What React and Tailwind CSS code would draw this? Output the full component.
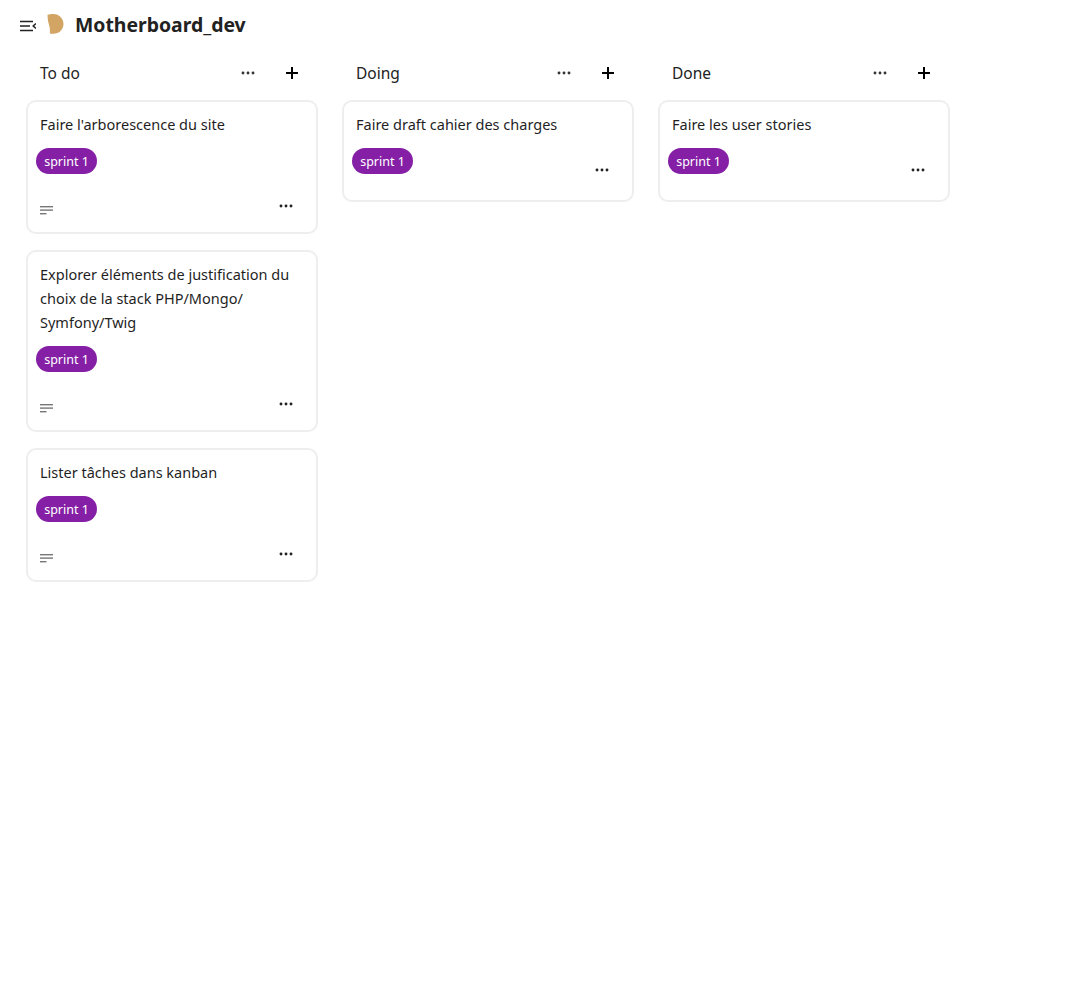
const font = { fontFamily: '"Noto Sans", "Open Sans", sans-serif' };

function Dots({ className = "" }) {
  return (
    <svg width="14" height="4" viewBox="0 0 14 4" className={className} fill="currentColor">
      <circle cx="2" cy="2" r="1.45" />
      <circle cx="7" cy="2" r="1.45" />
      <circle cx="12" cy="2" r="1.45" />
    </svg>
  );
}

function Plus() {
  return (
    <svg width="14" height="14" viewBox="0 0 14 14" stroke="#000" strokeWidth="2" fill="none">
      <path d="M7 1v12M1 7h12" />
    </svg>
  );
}

function Desc() {
  return (
    <svg width="14" height="9" viewBox="0 0 14 9" fill="#777">
      <rect x="0" y="0" width="13" height="1.4" />
      <rect x="0" y="3.4" width="13" height="1.4" />
      <rect x="0" y="7" width="6.5" height="1.4" />
    </svg>
  );
}

function Badge() {
  return (
    <span className="flex h-[26px] w-[61px] items-center justify-center rounded-[13px] bg-[#851fa5] pt-[2px] text-[12.5px] text-white">
      sprint 1
    </span>
  );
}

function Card({ title, desc }) {
  return (
    <div className="rounded-[10px] border-2 border-[#eeeeee] bg-white">
      <div className="px-3 pt-[10px] text-[14.5px] leading-6 text-[#1f1f1f]">
        {title.map((l) => (
          <div key={l} className="whitespace-nowrap">{l}</div>
        ))}
      </div>
      {desc ? (
        <>
          <div className="mt-3 flex pl-2"><Badge /></div>
          <div className="mt-[27px] flex h-[12px] items-start justify-between pl-3 pr-[23px]">
            <span className="mt-[5px] flex"><Desc /></span>
            <Dots className="mt-[3px] text-[#222]" />
          </div>
          <div className="h-[19px]" />
        </>
      ) : (
        <div className="mt-3 flex h-[52px] items-start justify-between pl-2 pr-[23px]">
          <Badge />
          <Dots className="mt-5 text-[#222]" />
        </div>
      )}
    </div>
  );
}

function Column({ name, cards }) {
  return (
    <div className="w-[292px] shrink-0">
      <div className="flex h-[50px] items-center justify-between pb-1 pl-[14px] pr-[19px]">
        <span className="pt-[2px] text-[15.5px] text-[#222]">{name}</span>
        <div className="flex items-center gap-[30px]">
          <Dots className="text-[#333]" />
          <Plus />
        </div>
      </div>
      <div className="flex flex-col gap-4">
        {cards.map((c) => (
          <Card key={c.title[0]} {...c} />
        ))}
      </div>
    </div>
  );
}

const columns = [
  {
    name: "To do",
    cards: [
      { title: ["Faire l'arborescence du site"], desc: true },
      {
        title: ["Explorer éléments de justification du", "choix de la stack PHP/Mongo/", "Symfony/Twig"],
        desc: true,
      },
      { title: ["Lister tâches dans kanban"], desc: true },
    ],
  },
  { name: "Doing", cards: [{ title: ["Faire draft cahier des charges"] }] },
  { name: "Done", cards: [{ title: ["Faire les user stories"] }] },
];

export default function App() {
  return (
    <div className="min-h-[997px] bg-white" style={font}>
      <header className="flex h-[50px] items-center pb-[2px] pl-5">
        <svg width="16" height="12" viewBox="0 0 16 12" fill="none" stroke="#222" strokeWidth="1.5" className="mt-1">
          <path d="M0 1.5h13M0 6h10M0 10.5h13M16 3.5 13.2 6l2.8 2.5" />
        </svg>
        <svg width="17" height="20" viewBox="0 0 17 20" fill="#d2a564" className="ml-[11px]">
          <path d="M0.5 0.7C2 0.2 4 0 6.5 0C12 0 16.5 4.5 16.5 10S12 19.8 6.5 19.8C5.2 19.8 4 19.7 2.8 19.4C3.2 16 2.8 13 1.8 10C1 7.5 0.6 4 0.5 0.7Z" />
        </svg>
        <h1 className="ml-[11px] mt-[2px] text-[19.4px] font-bold text-[#222]">Motherboard_dev</h1>
      </header>
      <main className="flex gap-6 pl-[26px]">
        {columns.map((c) => (
          <Column key={c.name} {...c} />
        ))}
      </main>
    </div>
  );
}
